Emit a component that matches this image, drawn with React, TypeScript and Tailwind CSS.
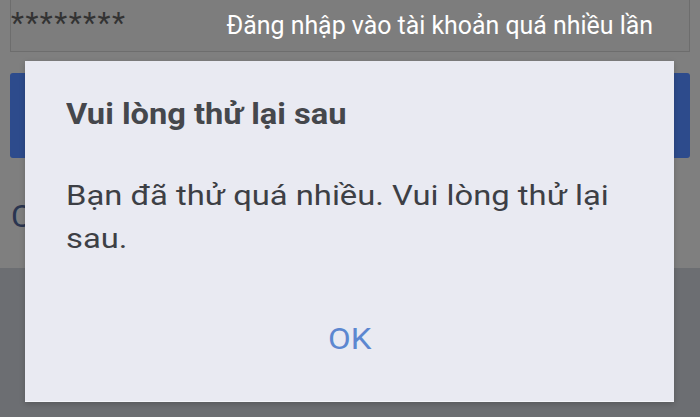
export default function App() {
  return (
    <div className="relative w-[700px] h-[417px] overflow-hidden bg-[#6c6e72] font-['Roboto',sans-serif]">
      {/* dimmed login page behind */}
      <div className="bg-[#7f7f7f] h-[268px] px-[10px] flex flex-col">
        <div className="h-[56px] -mt-[4px] border border-[#6d6d6d] bg-[#7d7d7d] flex items-start justify-between pl-[0px] pr-[36px]">
          <span className="text-[#333333] text-[30px] leading-none pt-[11px] tracking-[1.5px]">********</span>
          <span className="text-white text-[24.9px] leading-none pt-[17px]">Đăng nhập vào tài khoản quá nhiều lần</span>
        </div>
        <div className="mt-[21px] h-[85px] rounded-[3px] bg-[#2d4b8c]"></div>
        <div className="mt-[42px] text-[#2a3550] text-[32px] leading-none pl-[1px]">C</div>
      </div>

      {/* dialog */}
      <div className="absolute left-[25px] top-[61px] w-[649px] h-[341px] bg-[#e9eaf2] border-b border-[#f4f5fa] shadow-[0_2px_6px_rgba(0,0,0,0.2)] flex flex-col">
        <div className="pl-[41px] pr-[40px] pt-[39px]">
          <h2 className="inline-block origin-left scale-x-[1.125] text-[#45474c] text-[29px] font-bold leading-none whitespace-nowrap">
            Vui lòng thử lại sau
          </h2>
          <p className="mt-[43px] origin-left scale-x-[1.17] text-[#3d3f45] text-[28px] leading-[43px] whitespace-nowrap">
            Bạn đã thử quá nhiều. Vui lòng thử lại
            <br />
            sau.
          </p>
        </div>
        <div className="flex-1 flex items-end justify-center pb-[47px]">
          <button className="scale-x-110 text-[#5c87d0] text-[30px] leading-none">OK</button>
        </div>
      </div>
    </div>
  );
}
